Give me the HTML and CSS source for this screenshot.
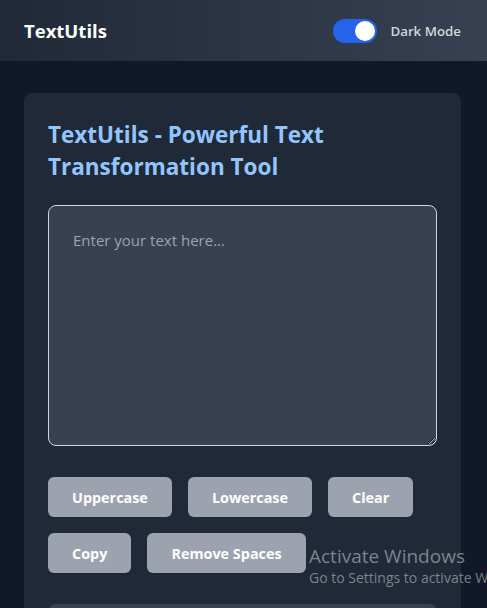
FILE: index.html
```html
<!DOCTYPE html>
<html lang="en">
<head>
<meta charset="utf-8">
<title>TextUtils</title>
<link rel="stylesheet" href="styles.css">
</head>
<body>
<header class="navbar">
  <div class="brand">TextUtils</div>
  <div class="mode">
    <span class="toggle"><span class="knob"></span></span>
    <span class="mode-label">Dark Mode</span>
  </div>
</header>
<main class="main">
  <section class="card">
    <h1 class="title">TextUtils - Powerful Text Transformation Tool</h1>
    <textarea class="input" placeholder="Enter your text here..."></textarea>
    <div class="actions">
      <button class="btn">Uppercase</button>
      <button class="btn">Lowercase</button>
      <button class="btn">Clear</button>
      <button class="btn">Copy</button>
      <button class="btn">Remove Spaces</button>
    </div>
    <div class="summary"></div>
  </section>
</main>
<div class="watermark">
  <div class="wm-title">Activate Windows</div>
  <div class="wm-sub">Go to Settings to activate Windows.</div>
</div>
</body>
</html>
```
FILE: styles.css
```css
html, body {
  margin: 0;
  padding: 0;
  overflow: hidden;
}
body {
  background: #111827;
  font-family: "Open Sans", "Noto Sans", sans-serif;
  color: #f3f4f6;
  min-height: 608px;
}
.navbar {
  height: 61px;
  box-sizing: border-box;
  padding: 0 26px 0 24px;
  display: flex;
  align-items: center;
  justify-content: space-between;
  background: linear-gradient(90deg, #1f2937 0%, #374151 100%);
}
.brand {
  font-size: 18.5px;
  font-weight: 700;
  color: #ffffff;
}
.mode {
  display: flex;
  align-items: center;
  gap: 13px;
}
.toggle {
  width: 44px;
  height: 24px;
  border-radius: 12px;
  background: #2563eb;
  display: flex;
  align-items: center;
  justify-content: flex-end;
  padding: 0 2px;
  box-sizing: border-box;
}
.knob {
  width: 20px;
  height: 20px;
  border-radius: 50%;
  background: #ffffff;
}
.mode-label {
  font-size: 13.3px;
  font-weight: 600;
  color: #d1d5db;
}
.main {
  padding: 32px 26px 0 24px;
}
.card {
  background: #1f2937;
  border-radius: 8px;
  padding: 24px;
}
.title {
  margin: 2px 0 22px;
  font-size: 22.5px;
  line-height: 32px;
  font-weight: 700;
  color: #93c5fd;
}
.input {
  display: block;
  width: 100%;
  height: 241px;
  box-sizing: border-box;
  background: #374151;
  border: 1px solid #d1d5db;
  border-radius: 8px;
  padding: 24px;
  font-family: inherit;
  font-size: 15px;
  color: #f3f4f6;
  resize: vertical;
  margin: 0 0 31px;
}
.input::placeholder {
  color: #9ca3af;
}
.actions {
  display: flex;
  flex-wrap: wrap;
  gap: 16px;
}
.btn {
  height: 40px;
  padding: 0 24px;
  background: #9ca3af;
  border: none;
  border-radius: 6px;
  color: #ffffff;
  font-family: inherit;
  font-size: 14.4px;
  font-weight: 700;
}
.summary {
  margin-top: 31px;
  height: 120px;
  background: #374151;
  border-radius: 8px;
}
.watermark {
  position: absolute;
  left: 309px;
  top: 544px;
  color: rgba(190, 195, 202, 0.6);
  white-space: nowrap;
}
.wm-title {
  font-size: 19px;
  line-height: 24px;
}
.wm-sub {
  font-size: 14px;
  line-height: 20px;
}
```
